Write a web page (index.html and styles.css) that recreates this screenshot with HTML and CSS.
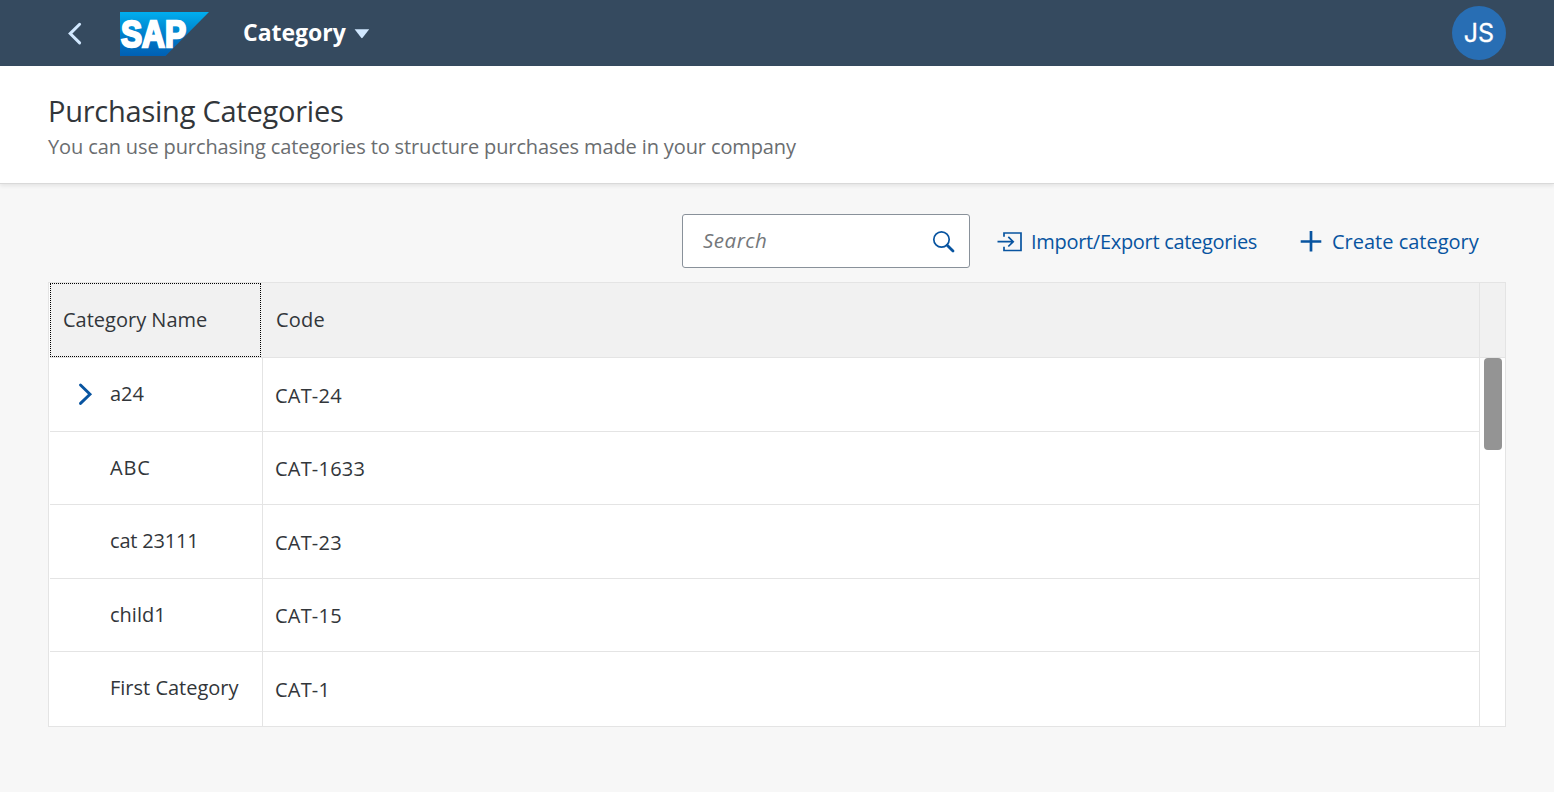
FILE: index.html
```
<!DOCTYPE html>
<html lang="en">
<head>
<meta charset="utf-8">
<title>Purchasing Categories</title>
<link rel="stylesheet" href="styles.css">
</head>
<body>
<header class="shell">
  <svg class="back" width="16" height="24" viewBox="0 0 16 24"><path d="M12.600 2.300 3.200 11.600 12.600 20.900" fill="none" stroke="#d1e8ff" stroke-width="3" stroke-linecap="round"/></svg>
  <svg class="logo" width="90" height="44" viewBox="0 0 90 44">
    <defs><linearGradient id="g" x1="0" y1="0" x2="0" y2="1"><stop offset="0" stop-color="#00aeef"/><stop offset=".25" stop-color="#0097dc"/><stop offset=".6" stop-color="#0077c6"/><stop offset="1" stop-color="#0060b4"/></linearGradient></defs>
    <path d="M0 0H89L45.500 44H0Z" fill="url(#g)"/>
    <text class="logo-text" x="1" y="34.700" textLength="65" lengthAdjust="spacingAndGlyphs">SAP</text>
  </svg>
  <div class="app-title">Category</div>
  <svg class="caret" width="16" height="10" viewBox="0 0 16 10"><path d="M.6.3H15.200L8.600 8.800Q7.900 9.600 7.200 8.800Z" fill="#d1e8ff"/></svg>
  <div class="avatar"><span>JS</span></div>
</header>
<section class="page-head">
  <h1 class="title">Purchasing Categories</h1>
  <p class="subtitle">You can use purchasing categories to structure purchases made in your company</p>
</section>
<main class="content">
  <div class="toolbar">
    <div class="search">
      <span class="placeholder">Search</span>
      <svg class="lens" width="24" height="24" viewBox="0 0 24 24" fill="none" stroke="#0854a0"><circle cx="9.500" cy="9.500" r="7.700" stroke-width="1.700"/><path d="M15.200 15.200 21 21" stroke-width="2.800" stroke-linecap="round"/></svg>
    </div>
    <div class="action import">
      <svg class="enter" width="26" height="20" viewBox="0 0 26 20" fill="none" stroke="#0854a0" stroke-width="1.700"><path d="M7 4.800V1H24V18.500H7V14.700M.5 9.700H16M11.300 4.900 16.200 9.700 11.300 14.500"/></svg>
      <span class="label">Import/Export categories</span>
    </div>
    <div class="action create">
      <svg width="22" height="22" viewBox="0 0 22 22"><path d="M11 .9V21.500M.7 11.500H21.300" stroke="#0854a0" stroke-width="2.700"/></svg>
      <span class="label">Create category</span>
    </div>
  </div>
  <div class="table">
    <div class="grid">
      <div class="row head"><div class="name focus">Category Name</div><div class="code">Code</div></div>
      <div class="row"><div class="name"><svg class="expand" width="14" height="22" viewBox="0 0 14 22"><path d="M1.500 2 11 11.200 1.500 20.400" fill="none" stroke="#0854a0" stroke-width="2.900" stroke-linecap="round"/></svg><span>a24</span></div><div class="code">CAT-24</div></div>
      <div class="row short"><div class="name wide"><span>ABC</span></div><div class="code">CAT-1633</div></div>
      <div class="row"><div class="name tight"><span>cat 23111</span></div><div class="code">CAT-23</div></div>
      <div class="row short"><div class="name lower"><span>child1</span></div><div class="code">CAT-15</div></div>
      <div class="row last"><div class="name"><span>First Category</span></div><div class="code">CAT-1</div></div>
    </div>
    <div class="rail"><div class="rail-head"></div><div class="thumb"></div></div>
  </div>
</main>
</body>
</html>
```
FILE: styles.css
```
* { box-sizing: border-box; }
body {
  margin: 0;
  height: 792px;
  overflow: hidden;
  background: #f7f7f7;
  color: #32363a;
  font: 20px/28px "Open Sans", "Noto Sans", sans-serif;
  white-space: nowrap;
}
svg { display: block; flex: none; overflow: visible; }
.shell {
  height: 66px;
  padding: 0 48px 0 67px;
  display: flex;
  align-items: center;
  background: #354a5f;
}
.back { margin-top: 1px; }
.logo { margin: 2px 0 0 37px; }
.logo-text { font-family: "Liberation Sans", Arial, sans-serif; font-size: 36px; font-weight: 700; fill: #fff; stroke: #fff; stroke-width: 2.4px; }
.app-title { width: 103px; margin-left: 33px; padding-bottom: 2px; font-size: 23px; font-weight: 700; color: #fff; }
.caret { margin: 2px 0 0 8px; }
.avatar {
  width: 54px;
  height: 54px;
  margin-left: auto;
  border-radius: 50%;
  display: flex;
  align-items: center;
  justify-content: center;
  background: #286eb4;
  color: #fff;
  font-family: Inter, sans-serif;
  font-size: 25px;
  font-weight: 400;
  -webkit-text-stroke: .3px #fff;
}
.page-head {
  height: 118px;
  padding: 28px 48px 0;
  background: #fff;
  border-bottom: 1px solid #d9d9d9;
  box-shadow: 0 2px 4px rgba(0, 0, 0, .08);
}
.title { margin: 0; font-size: 29px; line-height: 34px; font-weight: 400; letter-spacing: -.24px; }
.subtitle { margin: 5px 0 0; color: #6a6d70; letter-spacing: -.12px; }
.content { padding: 30px 48px 0; }
.toolbar { height: 54px; display: flex; justify-content: flex-end; padding-right: 27px; }
.search {
  width: 288px;
  height: 54px;
  padding: 0 13px 0 20px;
  display: flex;
  align-items: center;
  justify-content: space-between;
  background: #fff;
  border: 1px solid #89919a;
  border-radius: 3px;
}
.placeholder { padding-bottom: 2px; font-size: 20.5px; font-style: italic; color: #74777a; letter-spacing: .5px; }
.lens { margin-top: 1px; }
.action { display: flex; align-items: center; color: #0854a0; }
.label { padding-top: 2px; }
.enter { margin-top: 1px; }
.import { width: 260px; margin-left: 27px; gap: 8px; letter-spacing: -.3px; }
.create { width: 179px; margin-left: 43px; gap: 10px; }
.table {
  height: 445px;
  margin-top: 14px;
  display: flex;
  border: 1px solid #e4e4e4;
  background: #fff;
}
.grid { flex: 1; padding-left: 1px; border-right: 1px solid #e4e4e4; }
.row { display: flex; height: 74px; border-bottom: 1px solid #e4e4e4; }
.head { height: 75px; background: #f1f1f1; }
.short { height: 73px; }
.last { border-bottom: 0; }
.name {
  width: 213px;
  padding: 0 0 2px 60px;
  display: flex;
  align-items: center;
  border-right: 1px solid #e4e4e4;
}
.wide { padding-bottom: 0; letter-spacing: .8px; }
.tight { letter-spacing: -.2px; }
.lower { padding-bottom: 0; }
.code { flex: 1; padding: 2px 0 0 12px; display: flex; align-items: center; letter-spacing: .2px; }
.head .code { padding: 0 0 1px 13px; }
.focus { width: 212px; margin-right: 1px; padding: 0 0 1px 13px; border: 0; position: relative; }
.focus::after { content: ""; position: absolute; inset: 0 1px 0 0; border: 1px dotted #000; }
.expand { margin: 1px 17px 0 -31px; }
.rail { width: 25px; }
.rail-head { height: 75px; background: #f1f1f1; border-bottom: 1px solid #e4e4e4; }
.thumb { width: 18px; height: 92px; margin-left: 4px; border-radius: 4px; background: #949494; }
```
